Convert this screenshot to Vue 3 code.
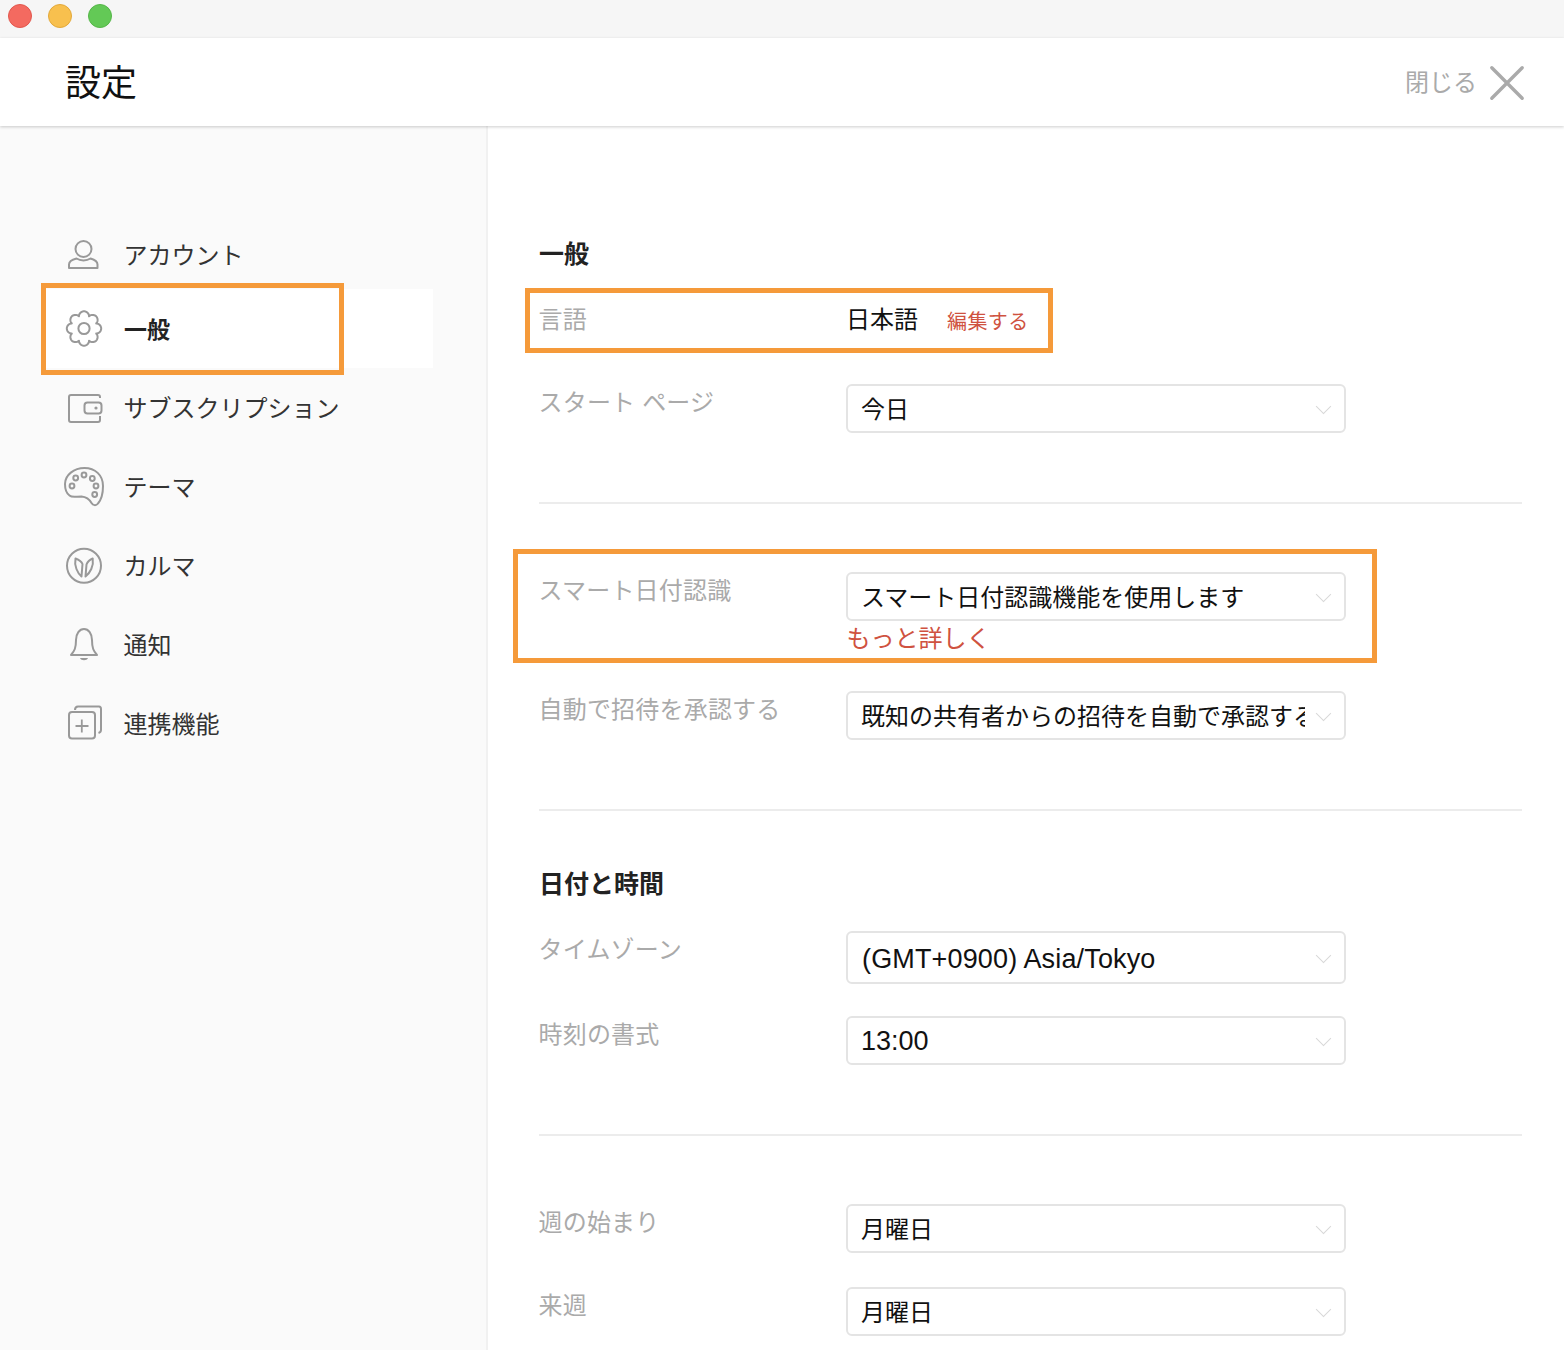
<script setup>
const navItems = [
  { id: 'account', label: 'アカウント' },
  { id: 'general', label: '一般' },
  { id: 'wallet', label: 'サブスクリプション' },
  { id: 'theme', label: 'テーマ' },
  { id: 'karma', label: 'カルマ' },
  { id: 'bell', label: '通知' },
  { id: 'addon', label: '連携機能' },
]

// rounded teeth with sharp valleys, 8 of them, centred in the 40x40 icon
const gearPath = (() => {
  const pts = []
  for (let i = 0; i < 144; i++) {
    const t = (i * Math.PI * 2) / 144
    const r = 13.2 + 4 * Math.pow(Math.abs(Math.cos(4 * t)), 0.7)
    pts.push(`${i === 0 ? 'M' : 'L'}${(20 + r * Math.cos(t)).toFixed(2)} ${(19.5 + r * Math.sin(t)).toFixed(2)}`)
  }
  return pts.join(' ') + ' Z'
})()
</script>

<template>
  <div class="window">
    <div class="titlebar">
      <span class="dot red"></span>
      <span class="dot yellow"></span>
      <span class="dot green"></span>
    </div>

    <header class="header">
      <h1 class="title">設定</h1>
      <div class="close">
        <span class="close-text">閉じる</span>
        <svg width="36" height="36" viewBox="0 0 36 36">
          <path d="M2.8 2.8 L33.2 33.2 M33.2 2.8 L2.8 33.2" stroke="#aaa" stroke-width="3.4" stroke-linecap="round" fill="none" />
        </svg>
      </div>
    </header>

    <div class="body">
      <aside class="sidebar">
        <nav class="nav">
          <div
            v-for="item in navItems"
            :key="item.id"
            class="nav-item"
            :class="{ active: item.id === 'general', first: item.id === 'account' }"
          >
            <svg class="icon" width="40" height="40" viewBox="0 0 40 40" fill="none" stroke="#999" stroke-width="2">
              <template v-if="item.id === 'account'">
                <circle cx="19.5" cy="14" r="8" />
                <path d="M5 33 V29.5 C5 26 8.5 24.5 12.5 23.5 C16.5 26 22.5 26 26.5 23.5 C30 24.5 33.5 26 33.5 29.5 V33 Z" stroke-linejoin="round" />
              </template>
              <template v-else-if="item.id === 'general'">
                <path :d="gearPath" stroke-linejoin="round" />
                <circle cx="20" cy="19.5" r="5.6" />
              </template>
              <template v-else-if="item.id === 'wallet'">
                <path d="M36 10 V9 C36 7.5 35 7 34 7 H7 C5.5 7 5 8 5 9 V32 C5 33.5 6 34 7 34 H34 C35 34 36 33.5 36 32 V28" stroke-linejoin="round" />
                <rect x="20.5" y="14.5" width="17" height="11" rx="3" />
                <circle cx="32" cy="20" r="1.6" fill="#999" stroke="none" />
              </template>
              <template v-else-if="item.id === 'theme'">
                <path d="M20.5 1 C31 1 39 8 39 19 C39 26 37 33 34 36.5 C32 39 29 38.5 27.5 36 C25.5 32.5 22.5 30 17.5 29.5 C12 29.5 8 31 5.5 28.5 C2 26 1 21 1 17 C1 8 10 1 20.5 1 Z" />
                <circle cx="8" cy="19" r="2.4" />
                <circle cx="11.7" cy="11" r="2.4" />
                <circle cx="20" cy="8" r="2.4" />
                <circle cx="28.3" cy="11.5" r="2.4" />
                <circle cx="32" cy="19" r="2.4" />
                <circle cx="30.7" cy="27.5" r="2.4" />
              </template>
              <template v-else-if="item.id === 'karma'">
                <circle cx="20" cy="19.7" r="17" />
                <path d="M11.5 12.5 C14 13.5 17.5 15.5 18.5 18 L17.5 30.5 C13.5 27 10 20 11.5 12.5 Z" stroke-linejoin="round" />
                <path d="M28.7 12.5 C26 13.5 23.5 15.5 22.5 18.5 L21.5 30.5 C26 27 30 20 28.7 12.5 Z" stroke-linejoin="round" />
              </template>
              <template v-else-if="item.id === 'bell'">
                <path d="M7 30 C10.5 26 12 23 12 15 C12 8.5 15.5 4 20 4 C24.5 4 28 8.5 28 15 C28 23 29.5 26 33 30 Z" stroke-linejoin="round" />
                <path d="M16 33 H24 C23 36 17 36 16 33 Z" fill="#999" stroke="none" />
              </template>
              <template v-else>
                <rect x="5" y="8" width="26" height="26.5" rx="3" />
                <path d="M11 6 C11 3.5 12 2.5 14 2.5 H35 C36.5 2.5 37 3.5 37 5 V26 C37 28 36 28.5 34.5 29" />
                <path d="M17.8 15.5 V28.5 M11.5 22 H24.5" stroke-width="1.8" />
              </template>
            </svg>
            <span class="nav-label">{{ item.label }}</span>
            <span v-if="item.id === 'general'" class="mark mark-nav"></span>
          </div>
        </nav>
      </aside>

      <main class="main">
        <h2 class="section-title">一般</h2>

        <div class="row lang-row">
          <span class="label">言語</span>
          <span class="lang-value">日本語</span>
          <a class="edit">編集する</a>
          <span class="mark mark-lang"></span>
        </div>

        <div class="row start-row">
          <span class="label top">スタート ページ</span>
          <div class="select"><span class="select-text">今日</span><i class="chevron"></i></div>
        </div>

        <hr class="divider" />

        <div class="row smart-row">
          <span class="label top">スマート日付認識</span>
          <div class="field">
            <div class="select"><span class="select-text">スマート日付認識機能を使用します</span><i class="chevron"></i></div>
            <a class="more">もっと詳しく</a>
          </div>
          <span class="mark mark-smart"></span>
        </div>

        <div class="row invite-row">
          <span class="label top">自動で招待を承認する</span>
          <div class="select"><span class="select-text">既知の共有者からの招待を自動で承認する</span><i class="chevron"></i></div>
        </div>

        <hr class="divider" />

        <h2 class="section-title date-title">日付と時間</h2>

        <div class="row zone-row">
          <span class="label top">タイムゾーン</span>
          <div class="select tall"><span class="select-text latin wide">(GMT+0900) Asia/Tokyo</span><i class="chevron"></i></div>
        </div>

        <div class="row format-row">
          <span class="label top">時刻の書式</span>
          <div class="select"><span class="select-text latin">13:00</span><i class="chevron"></i></div>
        </div>

        <hr class="divider" />

        <div class="row week-row">
          <span class="label top">週の始まり</span>
          <div class="select"><span class="select-text">月曜日</span><i class="chevron"></i></div>
        </div>

        <div class="row next-row">
          <span class="label top">来週</span>
          <div class="select"><span class="select-text">月曜日</span><i class="chevron"></i></div>
        </div>
      </main>
    </div>
  </div>
</template>

<style>
html,
body {
  margin: 0;
  background: #fff;
}
</style>

<style scoped>
.window {
  width: 1564px;
  height: 1350px;
  overflow: hidden;
  display: flex;
  flex-direction: column;
  font-family: "Liberation Sans", "Noto Sans CJK JP", sans-serif;
  background: #fff;
}

.titlebar {
  height: 38px;
  flex: none;
  background: #f6f6f6;
  display: flex;
  align-items: flex-start;
  gap: 16px;
  padding: 4px 0 0 8px;
  box-sizing: border-box;
}
.dot {
  width: 24px;
  height: 24px;
  border-radius: 50%;
  box-sizing: border-box;
}
.red {
  background: #f46a60;
  border: 1px solid #e2574d;
}
.yellow {
  background: #f8c04e;
  border: 1px solid #e3a93a;
}
.green {
  background: #63c956;
  border: 1px solid #55b648;
}

.header {
  height: 88px;
  flex: none;
  display: flex;
  align-items: center;
  justify-content: space-between;
  padding: 0 39px 0 65px;
  background: #fff;
  box-shadow: 0 1px 3px rgba(0, 0, 0, 0.2);
  position: relative;
  z-index: 2;
}
.title {
  margin: 0;
  padding-top: 4px;
  font-size: 36px;
  line-height: 1.2;
  font-weight: 400;
  color: #111;
}
.close {
  display: flex;
  align-items: center;
  gap: 12px;
  font-size: 24px;
  color: #aaa;
}
.close-text {
  padding-bottom: 4px;
}
.close svg {
  display: block;
  margin-top: 2px;
}

.body {
  flex: 1;
  display: flex;
  min-height: 0;
}

.sidebar {
  width: 488px;
  flex: none;
  box-sizing: border-box;
  background: #fafafa;
  border-right: 2px solid #f1f1f1;
  padding: 95px 0 0 45px;
}
.nav-item {
  position: relative;
  width: 388px;
  height: 79px;
  display: flex;
  align-items: center;
  gap: 19.5px;
  padding-left: 19px;
  box-sizing: border-box;
  font-size: 24px;
  color: #333;
}
.nav-item.first {
  height: 68px;
}
.nav-item.active {
  background: #fff;
  font-size: 23px;
  font-weight: 700;
  color: #222;
}
.icon {
  flex: none;
}
.nav-label {
  line-height: 34px;
  padding-top: 2px;
}
.active .nav-label {
  margin-left: 0.5px;
}

.mark {
  position: absolute;
  box-sizing: border-box;
  border: 5px solid #f59a3a;
  pointer-events: none;
}
.mark-nav {
  left: -4px;
  top: -6px;
  width: 303px;
  height: 92px;
}
.mark-lang {
  left: -14px;
  top: -8px;
  width: 528px;
  height: 65px;
}
.mark-smart {
  left: -26px;
  top: -23px;
  width: 864px;
  height: 114px;
}

.main {
  flex: 1;
  padding: 111px 42px 0 51px;
  box-sizing: border-box;
  min-width: 0;
}
.section-title {
  margin: 0;
  font-size: 25px;
  line-height: 34px;
  font-weight: 700;
  color: #222;
}

.row {
  position: relative;
  display: flex;
  align-items: flex-start;
}
.label {
  width: 307.5px;
  flex: none;
  margin-left: -0.5px;
  font-size: 24px;
  line-height: 34px;
  letter-spacing: 0.2px;
  color: #aaa;
}
.label.top {
  padding-top: 2px;
}
.lang-row {
  height: 48px;
  margin-top: 25px;
  align-items: center;
}
.lang-value {
  font-size: 24px;
  color: #111;
  line-height: 34px;
}
.edit {
  margin-left: 29px;
  padding-top: 4px;
  font-size: 20px;
  line-height: 34px;
  letter-spacing: 0.4px;
  color: #cf5240;
}
.start-row {
  margin-top: 40px;
}
.smart-row {
  margin-top: 68px;
}
.invite-row {
  margin-top: 35px;
}
.date-title {
  margin-top: 56px;
}
.zone-row {
  margin-top: 30px;
}
.format-row {
  margin-top: 32px;
}
.week-row {
  margin-top: 68px;
}
.next-row {
  margin-top: 34px;
}
.field {
  display: flex;
  flex-direction: column;
}
.more {
  padding-top: 1px;
  margin-left: 0.5px;
  font-size: 24px;
  line-height: 34px;
  color: #cf5240;
}

.select {
  width: 500px;
  height: 49px;
  box-sizing: border-box;
  border: 2px solid #e4e4e4;
  border-radius: 6px;
  background: #fff;
  padding-left: 13px;
  display: flex;
  align-items: center;
  position: relative;
}
.select.tall {
  height: 53px;
}
.select-text {
  width: 444px;
  overflow: hidden;
  white-space: nowrap;
  padding-bottom: 2px;
  font-size: 24px;
  color: #111;
}
.select-text.latin {
  padding-bottom: 0;
  padding-top: 2px;
  font-size: 27px;
}
.select-text.wide {
  padding-top: 4px;
  margin-left: 1px;
  letter-spacing: 0.15px;
}
.chevron {
  position: absolute;
  right: 15px;
  top: 50%;
  box-sizing: border-box;
  width: 11px;
  height: 11px;
  margin-top: -8px;
  border-right: 1.5px solid #d8d8d8;
  border-bottom: 1.5px solid #d8d8d8;
  transform: rotate(45deg);
}

.divider {
  border: 0;
  height: 2px;
  background: #ececec;
  margin: 69px 0 0;
}
</style>
